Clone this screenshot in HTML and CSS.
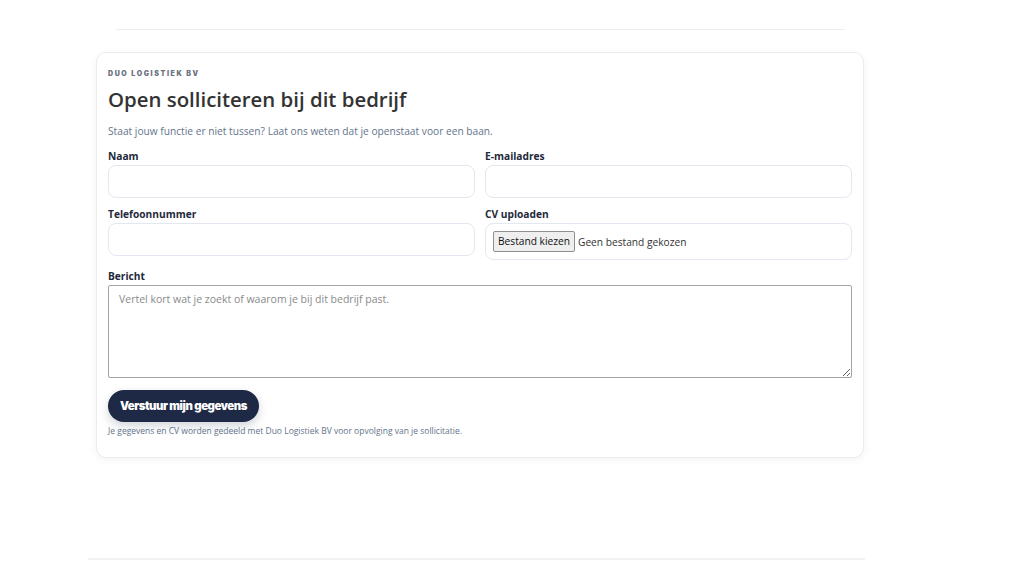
FILE: index.html
```html
<!DOCTYPE html>
<html lang="nl">
<head>
<meta charset="utf-8">
<title>Open solliciteren</title>
<link rel="stylesheet" href="styles.css">
</head>
<body>
<div class="page">
  <div class="topline"></div>
  <section class="card">
    <div class="eyebrow">DUO LOGISTIEK BV</div>
    <h1 class="title">Open solliciteren bij dit bedrijf</h1>
    <p class="intro">Staat jouw functie er niet tussen? Laat ons weten dat je openstaat voor een baan.</p>
    <form class="form">
      <div class="grid">
        <div class="field">
          <label class="label">Naam</label>
          <div class="input"></div>
        </div>
        <div class="field">
          <label class="label">E-mailadres</label>
          <div class="input"></div>
        </div>
        <div class="field">
          <label class="label">Telefoonnummer</label>
          <div class="input"></div>
        </div>
        <div class="field">
          <label class="label">CV uploaden</label>
          <div class="input file">
            <span class="file-btn">Bestand kiezen</span>
            <span class="file-name">Geen bestand gekozen</span>
          </div>
        </div>
      </div>
      <div class="field full">
        <label class="label">Bericht</label>
        <textarea class="textarea" placeholder="Vertel kort wat je zoekt of waarom je bij dit bedrijf past."></textarea>
      </div>
      <button type="button" class="submit">Verstuur mijn gegevens</button>
      <p class="note">Je gegevens en CV worden gedeeld met Duo Logistiek BV voor opvolging van je sollicitatie.</p>
    </form>
  </section>
  <div class="bottomline"></div>
</div>
</body>
</html>
```

FILE: styles.css
```css
html, body {
  margin: 0;
  padding: 0;
  background: #ffffff;
}
body {
  font-family: "Open Sans", "Noto Sans", sans-serif;
  color: #1e293b;
}
.page {
  width: 768px;
  margin-left: 96px;
  padding-top: 29px;
}
.topline {
  height: 1px;
  background: #ededed;
  margin: 0 19px 0 20px;
}
.card {
  margin-top: 22px;
  height: 406px;
  box-sizing: border-box;
  border: 1px solid #ececec;
  border-radius: 10px;
  background: #ffffff;
  box-shadow: 0 2px 8px rgba(0, 0, 0, 0.05);
  padding: 16px 11px 0 11px;
}
.eyebrow {
  font-family: "Inter", sans-serif;
  font-weight: 900;
  font-size: 7px;
  line-height: 10px;
  letter-spacing: 1.6px;
  color: #6b7280;
}
.title {
  margin: 6px 0 0 0;
  font-size: 20.4px;
  line-height: 28px;
  font-weight: 600;
  color: #333333;
}
.intro {
  margin: 11px 0 0 0;
  font-size: 10.2px;
  line-height: 14px;
  color: #64748b;
}
.form {
  margin-top: 11px;
}
.grid {
  display: grid;
  grid-template-columns: 1fr 1fr;
  column-gap: 10px;
  row-gap: 9px;
  align-items: start;
}
.field {
  display: flex;
  flex-direction: column;
}
.full {
  margin-top: 9px;
}
.label {
  font-size: 10.2px;
  line-height: 14px;
  font-weight: 700;
  color: #1e293b;
  margin-bottom: 2px;
}
.input {
  height: 33px;
  box-sizing: border-box;
  border: 1px solid #e3e8f0;
  border-radius: 8px;
  background: #ffffff;
}
.file {
  height: 37px;
  display: flex;
  align-items: center;
  padding-left: 7px;
  gap: 3px;
  font-size: 10.2px;
}
.file-btn {
  background: #efefef;
  border: 1px solid #8f8f8f;
  border-radius: 2px;
  padding: 2px 4px;
  line-height: 15px;
  color: #111111;
}
.file-name {
  color: #333333;
}
.textarea {
  height: 93px;
  box-sizing: border-box;
  border: 1px solid #a3a3a3;
  border-radius: 2px;
  padding: 6px 10px;
  font-family: "Open Sans", "Noto Sans", sans-serif;
  font-size: 10.5px;
  line-height: 14px;
  margin: 0;
}
.textarea::placeholder {
  color: #8a8a8a;
}
.submit {
  display: block;
  margin-top: 12px;
  height: 32px;
  padding: 0 12px;
  border: 0;
  border-radius: 16px;
  background: #1e2945;
  color: #ffffff;
  font-family: "Inter", sans-serif;
  font-weight: 900;
  font-size: 11.4px;
  letter-spacing: -0.45px;
  box-shadow: 0 4px 10px rgba(30, 41, 69, 0.2);
}
.note {
  margin: 4px 0 0 0;
  font-size: 8.5px;
  line-height: 10px;
  color: #64748b;
}
.bottomline {
  height: 2px;
  background: #f2f2f2;
  margin: 100px -1px 0 -8px;
}
```
